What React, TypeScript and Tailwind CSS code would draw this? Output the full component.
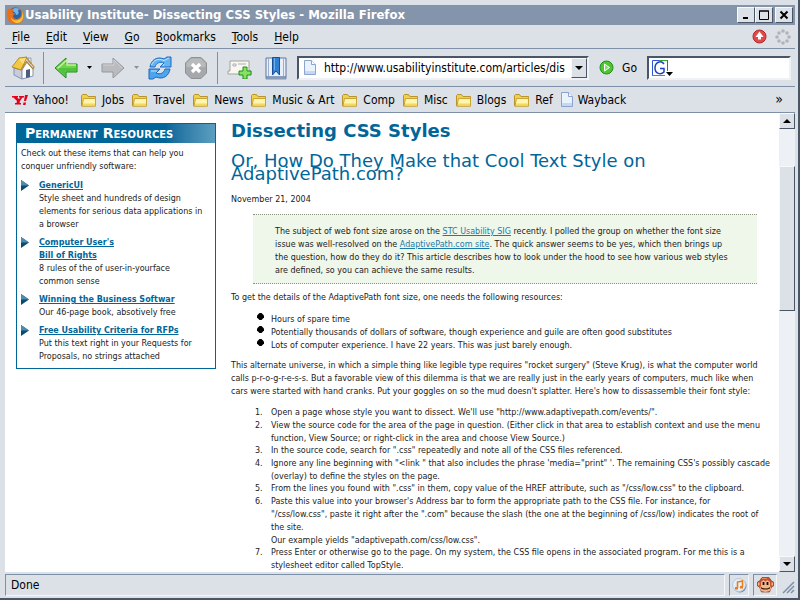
import type { ReactNode } from "react";

const raised = "border border-t-[#f7f9fb] border-l-[#f7f9fb] border-r-[#4a5566] border-b-[#4a5566]";
const sunken = "border border-t-[#7d90a8] border-l-[#7d90a8] border-r-[#f4f6f9] border-b-[#f4f6f9]";

function FirefoxLogo() {
  return (
    <svg width="19" height="19" viewBox="0 0 19 19" aria-hidden="true">
      <circle cx="9.500" cy="9.500" r="8.500" fill="#e2711d" />
      <circle cx="9.500" cy="7.500" r="6" fill="#2c62a8" />
      <path d="M7 3c2-2 6-1 8 1-2-1-3 0-3 1 1 1 1 3-1 4-2 0-1-3-3-3-2-1-2-2-1-3z" fill="#6fb5e6" />
      <path d="M2 2l2 2c2-1 3-1 4 0L6 6l3 2c-1 1-2 1-2 2 0 3 4 4 7 2 2-1 3-4 2-7 2 3 3 7 0 10-3 4-9 4-12 1C0 13 0 7 2 2z" fill="#e8701a" />
      <path d="M16 5c1 4 0 8-4 9-3 1-6 0-7-3 0 4 4 6 7 6 5-1 7-7 4-12z" fill="#f8c33c" />
    </svg>
  );
}

function HomeIcon() {
  return (
    <svg width="24" height="24" viewBox="0 0 24 24" aria-hidden="true">
      <path d="M3 12l8 2v9l-8-4z" fill="#c6cedd" stroke="#8794ae" />
      <path d="M17 2h3v6l-3-3z" fill="#e4e8ef" stroke="#7687a3" strokeWidth=".7" />
      <path d="M11 14l5-8 6 7v7l-11 3z" fill="#fff" stroke="#8794ae" />
      <path d="M15 14l4-1v8l-4 1z" fill="#4a5f80" />
      <path d="M1 11L8 2l8-1-6 13z" fill="#f5c842" stroke="#a8761c" strokeWidth=".8" />
      <path d="M8 3l7-1-3 6z" fill="#fbe083" />
      <path d="M15 1l8 10-1 2-6.500-7.500L10 14" fill="none" stroke="#b88a2c" strokeWidth="1.200" />
    </svg>
  );
}

function ArrowIcon({ forward = false }: { forward?: boolean }) {
  return (
    <svg width="24" height="24" viewBox="0 0 24 24" aria-hidden="true">
      {forward ? (
        <>
          <path d="M1 8h11V2l11 10-11 10v-6H1z" fill="#b9bbbf" stroke="#96999e" />
          <path d="M2 9h11V4l8 8" fill="none" stroke="#d0d2d5" />
        </>
      ) : (
        <>
          <path d="M23 8H12V2L1 12l11 10v-6h11z" fill="#6fd34d" stroke="#1e8a1c" />
          <path d="M12 12h10v3H11v5l-8-8z" fill="#3fb832" opacity=".6" />
          <path d="M22 9h-9V4l-9.500 8.500" fill="none" stroke="#c6f29a" strokeWidth="1.500" />
        </>
      )}
    </svg>
  );
}

function ReloadIcon() {
  return (
    <svg width="24" height="24" viewBox="0 0 24 24" aria-hidden="true">
      <path d="M2 11C3 4 9 0 16 3l3-2h4v10H12l4-4c-4-2-8 0-9 4z" fill="#62b4f4" stroke="#1a69bd" />
      <path d="M22 13c-1 7-7 11-14 8l-3 2H1V13h11l-4 4c4 2 8 0 9-4z" fill="#4da5ee" stroke="#1a69bd" />
      <path d="M3.500 9C5.500 4 10 2 16 4.500L21 2M3 15h6M16 8l-1 2" fill="none" stroke="#c4e6ff" />
    </svg>
  );
}

function StopIcon() {
  return (
    <svg width="24" height="24" viewBox="0 0 24 24" aria-hidden="true">
      <path d="M7 1.500h10l5.500 5.500v10L17 22.500H7L1.500 17V7z" fill="#a6a8ab" stroke="#8e9094" />
      <path d="M7.500 2.500h9l5 5V11h-19V7.500z" fill="#b8babc" />
      <path d="M8 8l8 8M16 8l-8 8" stroke="#fff" strokeWidth="3.200" />
    </svg>
  );
}

function NewTabIcon() {
  return (
    <svg width="26" height="22" viewBox="0 0 26 22" aria-hidden="true">
      <path d="M3 4h19v10h2v3H1v-3h2z" fill="#f8f7f0" stroke="#a3a49c" />
      <path d="M6 7h3v2H6zM11 7h8" fill="none" stroke="#a9afbb" />
      <path d="M16 10h4v4h4v4h-4v4h-4v-4h-4v-4h4z" fill="#86e35e" stroke="#1f8c20" />
    </svg>
  );
}

function BookmarksIcon() {
  return (
    <svg width="22" height="24" viewBox="0 0 22 24" aria-hidden="true">
      <path d="M1 2h9l1 1 1-1h9v19H1z" fill="#e8eff8" stroke="#5a75a0" />
      <path d="M1 21h20v2H1z" fill="#9dafca" stroke="#5a75a0" strokeWidth=".7" />
      <path d="M3.500 3v17M18.500 3v17" stroke="#9bb0cf" />
      <path d="M7.500 1.500h7V19L11 15l-3.500 4z" fill="#2f7fd3" stroke="#174f99" />
      <path d="M9.500 2v12" stroke="#6fb0ef" />
    </svg>
  );
}

function PageIcon() {
  return (
    <svg width="12" height="15" viewBox="0 0 12 15" aria-hidden="true">
      <path d="M.5.5h7l4 4v10H.5z" fill="#eaf2fd" stroke="#8ba3cf" />
      <path d="M7.500.5v4h4" fill="#fff" stroke="#8ba3cf" />
      <path d="M1 12.500h10" stroke="#c2d8f5" strokeWidth="3" />
    </svg>
  );
}

function FolderIcon() {
  return (
    <svg width="16" height="14" viewBox="0 0 16 14" aria-hidden="true">
      <path d="M.5 2.500l1-1h4l1.500 2h7.500v9.500H.5z" fill="#f2cf4d" stroke="#b8942a" />
      <path d="M2.500 5.500h12v7.500H1z" fill="#fff5ae" stroke="#c9a536" />
      <path d="M2 11.500h12" stroke="#f3d95f" strokeWidth="2" />
    </svg>
  );
}

function YahooIcon() {
  return (
    <svg width="16" height="10" viewBox="0 0 16 10" aria-hidden="true">
      <path d="M0 1h6v1.500H5L7 4l1.500-1.500H7V1h5v1.500h-1.500L8 6l-.5 2H9v1.500H3V8h1.500L5 6 1.500 2.500H0z" fill="#e3001b" />
      <path d="M13 0h3l-2 6h-2zM11.500 7.500H14L13.500 10H11z" fill="#e3001b" />
    </svg>
  );
}

function GoIcon() {
  return (
    <svg width="15" height="15" viewBox="0 0 15 15" aria-hidden="true">
      <circle cx="7.500" cy="7.500" r="6.500" fill="#4fc531" stroke="#1a8f1b" />
      <path d="M5.500 4l5 3.500-5 3.500z" fill="#8ae06c" stroke="#fff" />
    </svg>
  );
}

function GoogleIcon() {
  return (
    <svg width="22" height="18" viewBox="0 0 22 18" aria-hidden="true">
      <path d="M1.500 16.500v-15h7" fill="none" stroke="#2a56d8" />
      <path d="M8 1.500h8" stroke="#35a83c" />
      <path d="M16.500 1v11" stroke="#d92f2b" />
      <path d="M1 16.500h13" stroke="#35a83c" />
      <path d="M13 5c-3-4-9-2-9 4s6 7 9 4V9.500H9" fill="none" stroke="#2340c4" strokeWidth="1.500" />
      <path d="M15 13h7l-3.500 4z" fill="#000" />
    </svg>
  );
}

function UpdateIcon() {
  return (
    <svg width="15" height="15" viewBox="0 0 15 15" aria-hidden="true">
      <circle cx="7.500" cy="7.500" r="6.500" fill="#e0484a" stroke="#b0272c" />
      <path d="M7.500 2.500L11.500 8h-8z" fill="#fff" />
      <path d="M6 8h3v2.500H6z" fill="#fff" />
    </svg>
  );
}

function Throbber() {
  const dots = [[8, 2], [12, 4], [14, 8], [12, 12], [8, 14], [4, 12], [2, 8], [4, 4]];
  return (
    <svg width="16" height="16" viewBox="0 0 16 16" aria-hidden="true">
      {dots.map(([x, y]) => <circle key={`${x}-${y}`} cx={x} cy={y} r="1.800" fill="#b1b3b7" />)}
    </svg>
  );
}

function MusicIcon() {
  return (
    <svg width="15" height="15" viewBox="0 0 15 15" aria-hidden="true">
      <circle cx="8" cy="8" r="6.500" fill="#6289b5" />
      <circle cx="7" cy="7" r="6.500" fill="#e3eefa" stroke="#b5c8de" />
      <path d="M5.500 10V4l5-1v6" fill="none" stroke="#ed7b12" strokeWidth="1.500" />
      <path d="M3 9h3v2.500H3zM8 8h3v2.500H8z" fill="#ed7b12" />
    </svg>
  );
}

function MonkeyIcon() {
  return (
    <svg width="17" height="16" viewBox="0 0 17 16" aria-hidden="true">
      <path d="M5 .5h7l2.500 3.500 2 1v4l-2 1-2 5h-8l-2-5-2-1V5l2-1z" fill="#c4532c" stroke="#8a3516" strokeWidth=".7" />
      <path d="M4 5l2.500-2L8.500 4.500 10.500 3 13 5v4l1.500 2-2 3-4 1-4-1-2-3L4 9zM1 5.500h1.500v3H1zM14.500 5.500H16v3h-1.500z" fill="#f4b68a" />
      <path d="M6.500 5v3M10.500 5v3" stroke="#1b0c05" strokeWidth="1.800" />
      <path d="M4 10.500c1 2 8 2 9 0" fill="none" stroke="#2b0f06" strokeWidth="1.200" />
      <path d="M5 1.500h5" stroke="#e58a5f" />
    </svg>
  );
}

function Triangle({ up = false }: { up?: boolean }) {
  return (
    <svg width="8" height="4" viewBox="0 0 8 4" aria-hidden="true">
      <path d={up ? "M0 4h8L4 0z" : "M0 0h8L4 4z"} fill="#000" />
    </svg>
  );
}

function SmallTriangle({ color }: { color: string }) {
  return (
    <svg width="5" height="3" viewBox="0 0 5 3" aria-hidden="true">
      <path d="M0 0h5L2.500 3z" fill={color} />
    </svg>
  );
}

function WindowButton({ label, children }: { label: string; children: ReactNode }) {
  return (
    <button aria-label={label} className={`flex h-4 w-[18px] items-center justify-center bg-[#dce0e7] ${raised}`}>
      <svg width="12" height="12" viewBox="0 0 12 12" aria-hidden="true" fill="none" stroke="#000">{children}</svg>
    </button>
  );
}

function Separator() {
  return <div className="h-8 w-px bg-[#7d90a8]" />;
}

const menus = ["File", "Edit", "View", "Go", "Bookmarks", "Tools", "Help"];
const folders = ["Jobs", "Travel", "News", "Music & Art", "Comp", "Misc", "Blogs", "Ref"];

function Chrome() {
  return (
    <header className="shrink-0">
      <div className="flex h-5 items-center bg-[#8494aa] pr-[2px] pl-px text-white">
        <FirefoxLogo />
        <span className="grow text-[13px] font-bold whitespace-nowrap">Usability Institute- Dissecting CSS Styles - Mozilla Firefox</span>
        <WindowButton label="Minimize"><path d="M3 9h5" strokeWidth="2" /></WindowButton>
        <WindowButton label="Maximize"><path d="M1.500 2h9v8.500h-9zM1 2h10" /></WindowButton>
        <div className="w-[2px]" />
        <WindowButton label="Close"><path d="M2.500 2.500l7 7M9.500 2.500l-7 7" strokeWidth="2" /></WindowButton>
      </div>
      <nav className="flex h-6 items-center gap-4 border-b border-[#7d90a8] pr-1 pl-[7px]">
        {menus.map((m) => (
          <button key={m}><span className="underline underline-offset-2">{m[0]}</span>{m.slice(1)}</button>
        ))}
        <div className="grow" />
        <div className="flex items-center gap-2"><UpdateIcon /><Throbber /></div>
      </nav>
      <div className="flex h-[38px] items-center border-b border-[#7d90a8] pr-1 pl-[6px]">
        <button aria-label="Home" className="mr-2"><HomeIcon /></button>
        <Separator />
        <button aria-label="Back" className="ml-[10px]"><ArrowIcon /></button>
        <button aria-label="Back history" className="mx-[9px]"><SmallTriangle color="#000" /></button>
        <button aria-label="Forward"><ArrowIcon forward /></button>
        <button aria-label="Forward history" className="mx-[9px]"><SmallTriangle color="#8d9096" /></button>
        <button aria-label="Reload"><ReloadIcon /></button>
        <button aria-label="Stop" className="mr-[9px] ml-3"><StopIcon /></button>
        <Separator />
        <button aria-label="New tab" className="ml-[9px]"><NewTabIcon /></button>
        <button aria-label="Bookmarks" className="ml-3"><BookmarksIcon /></button>
        <div className="ml-[10px] flex h-6 min-w-0 grow items-center border-2 border-t-[#4a5566] border-r-[#eef1f5] border-b-[#eef1f5] border-l-[#4a5566] bg-white pl-[5px]">
          <PageIcon />
          <input aria-label="Address" className="ml-2 min-w-0 grow bg-white outline-none" defaultValue="http://www.usabilityinstitute.com/articles/dis" />
          <button aria-label="Address history" className={`flex h-5 w-4 items-center justify-center bg-[#dce0e7] ${raised}`}><Triangle /></button>
        </div>
        <button className="ml-[10px] flex items-center gap-2"><GoIcon />Go</button>
        <div className="ml-[10px] flex h-6 w-[144px] items-center border-2 border-t-[#4a5566] border-r-[#eef1f5] border-b-[#eef1f5] border-l-[#4a5566] bg-white pl-[2px]">
          <GoogleIcon />
          <input aria-label="Search" className="w-0 grow bg-white outline-none" />
        </div>
      </div>
      <div className="flex h-[26px] items-center gap-2 border-b border-[#7d90a8] pr-3 pl-[7px]">
        <a href="#yahoo" className="mr-1 flex items-center gap-[5px]"><YahooIcon />Yahoo!</a>
        {folders.map((f) => (
          <button key={f} className="flex items-center gap-[5px] whitespace-nowrap"><FolderIcon />{f}</button>
        ))}
        <a href="#wayback" className="flex items-center gap-[5px]"><PageIcon />Wayback</a>
        <button aria-label="More bookmarks" className="ml-auto text-[14px]">»</button>
      </div>
    </header>
  );
}

const resources: { title: ReactNode; text: string }[] = [
  { title: "GenericUI", text: "Style sheet and hundreds of design elements for serious data applications in a browser" },
  { title: <>Computer User's <br />Bill of Rights</>, text: "8 rules of the of user-in-yourface common sense" },
  { title: "Winning the Business Softwar", text: "Our 46-page book, absotively free" },
  { title: "Free Usability Criteria for RFPs", text: "Put this text right in your Requests for Proposals, no strings attached" },
];

function Sidebar() {
  return (
    <aside className="w-[200px] shrink-0 self-start border border-[#006699]">
      <h2 className="h-[19px] bg-linear-to-r from-[#006699] from-75% to-[#5c9fc0] pl-2 text-[14px] leading-[19px] font-bold whitespace-nowrap text-white [font-variant:small-caps]">Permanent Resources</h2>
      <div className="px-1 pt-1 pb-[5px]">
        <p>Check out these items that can help you conquer unfriendly software:</p>
        <ul className="pt-px">
          {resources.map((r) => (
            <li key={r.text} className="mt-[5px] flex gap-[10px] pr-[6px]">
              <svg width="8" height="11" viewBox="0 0 8 11" className="mt-px shrink-0" aria-hidden="true">
                <path d="M0 0l8 5.500L0 11z" fill="#0b4b72" /><path d="M0 0l8 5.500H0z" fill="#4b8cb0" />
              </svg>
              <div>
                <a href="#resource" className="font-bold text-[#006699] underline">{r.title}</a>
                <p>{r.text}</p>
              </div>
            </li>
          ))}
        </ul>
      </div>
    </aside>
  );
}

const needs = [
  "Hours of spare time",
  "Potentially thousands of dollars of software, though experience and guile are often good substitutes",
  "Lots of computer experience. I have 22 years. This was just barely enough.",
];

const steps: ReactNode[] = [
  `Open a page whose style you want to dissect. We'll use "http://www.adaptivepath.com/events/".`,
  "View the source code for the area of the page in question. (Either click in that area to establish context and use the menu function, View Source; or right-click in the area and choose View Source.)",
  `In the source code, search for ".css" repeatedly and note all of the CSS files referenced.`,
  `Ignore any line beginning with "<link " that also includes the phrase 'media="print" '. The remaining CSS's possibly cascade (overlay) to define the styles on the page.`,
  `From the lines you found with ".css" in them, copy value of the HREF attribute, such as "/css/low.css" to the clipboard.`,
  <>Paste this value into your browser's Address bar to form the appropriate path to the CSS file. For instance, for<br />"/css/low.css", paste it right after the ".com" because the slash (the one at the beginning of /css/low) indicates the root of <span className="whitespace-nowrap">the site.</span><br />Our example yields "adaptivepath.com/css/low.css".</>,
  "Press Enter or otherwise go to the page. On my system, the CSS file opens in the associated program. For me this is a stylesheet editor called TopStyle.",
];

function Article() {
  return (
    <main className="min-w-0 grow">
      <h1 className="h-6 text-[18px] leading-[15px] font-bold text-[#006699]">Dissecting CSS Styles</h1>
      <h2 className="mt-[7px] text-[18px] leading-[13px] text-[#006699]">Or, How Do They Make that Cool Text Style on<br />AdaptivePath.com?</h2>
      <p className="mt-[13px]">November 21, 2004</p>
      <blockquote className="mt-2 mr-[19px] ml-[22px] border-y border-dotted border-[#8a9480] bg-[#eff6ea] px-[22px] pt-[10px] pb-[6px]">
        The subject of web font size arose on the <a href="#sig" className="text-[#1b7ba8] underline">STC Usability SIG</a> recently. I polled the group on whether the font size issue was well-resolved on the <a href="#ap" className="text-[#1b7ba8] underline">AdaptivePath.com site</a>. The quick answer seems to be yes, which then brings up the question, how do they do it? This article describes how to look under the hood to see how various web styles are defined, so you can achieve the same results.
      </blockquote>
      <p className="mt-[7px]">To get the details of the AdaptivePath font size, one needs the following resources:</p>
      <ul className="mt-[9px] pl-[26px]">
        {needs.map((need) => (
          <li key={need} className="flex gap-[7px]">
            <svg width="7" height="7" viewBox="0 0 7 7" className="shrink-0" aria-hidden="true"><path d="M2.500 0h2L7 2.500v2L4.500 7h-2L0 4.500v-2z" fill="#000" /></svg>
            {need}
          </li>
        ))}
      </ul>
      <p className="mt-[7px] pr-[6px]">This alternate universe, in which a simple thing like legible type requires "rocket surgery" (Steve Krug), is what the computer world calls p-r-o-g-r-e-s-s. But a favorable view of this dilemma is that we are really just in the early years of computers, much like when cars were started with hand cranks. Put your goggles on so the mud doesn't splatter. Here's how to dissassemble their font style:</p>
      <ol className="mt-2 pl-6">
        {steps.map((step, i) => (
          <li key={i} className="flex even:-mb-px">
            <span className="w-4 shrink-0">{i + 1}.</span>
            <div>{step}</div>
          </li>
        ))}
      </ol>
    </main>
  );
}

function Scrollbar() {
  return (
    <div className="flex w-4 shrink-0 flex-col bg-[#edf0f4]" aria-hidden="true">
      <div className={`flex h-4 items-center justify-center bg-[#dce0e7] ${raised}`}><Triangle up /></div>
      <div className="h-[37px]" />
      <div className={`h-[145px] bg-[#dce0e7] ${raised}`} />
      <div className="grow" />
      <div className={`flex h-4 items-center justify-center bg-[#dce0e7] ${raised}`}><Triangle /></div>
    </div>
  );
}

export default function App() {
  return (
    <div className="flex h-screen flex-col overflow-hidden border-r-2 border-b-2 border-[#4a5566] bg-[#dce0e7] pt-[5px] pr-[3px] pb-[2px] pl-[5px] font-['DejaVu_Sans_Condensed','DejaVu_Sans',sans-serif] text-[12px] text-black">
      <Chrome />
      <div className="flex min-h-0 grow">
        <div className="flex min-w-0 grow gap-[15px] overflow-hidden bg-white pt-[10px] pr-[3px] pl-[11px] font-['DejaVu_Sans',sans-serif] text-[8px] leading-[13px] text-[#222]">
          <Sidebar />
          <Article />
        </div>
        <Scrollbar />
      </div>
      <footer className="mt-[2px] flex h-[22px] shrink-0 gap-1">
        <div className={`flex grow items-center pl-[5px] ${sunken}`}>Done</div>
        <div className={`flex w-5 items-center justify-center ${sunken}`}><MusicIcon /></div>
        <div className={`flex w-6 items-center justify-center ${sunken}`}><MonkeyIcon /></div>
        <svg width="14" height="20" viewBox="0 0 14 20" aria-hidden="true" stroke="#7d90a8" strokeWidth="1.500"><path d="M2 19L13 8M6 19l7-7M10 19l3-3" /></svg>
      </footer>
    </div>
  );
}
